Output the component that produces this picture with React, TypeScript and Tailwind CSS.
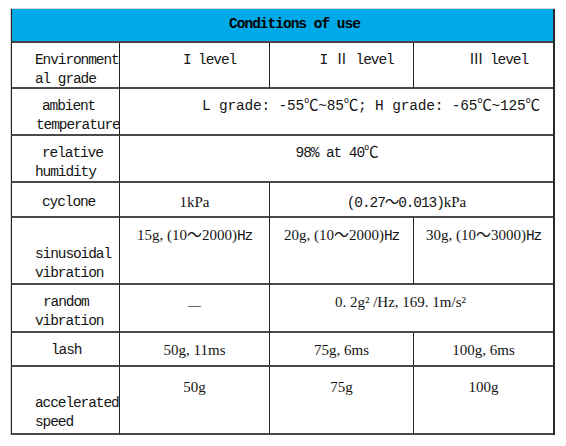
import type { ReactNode } from "react";

const mono = "font-['Liberation_Mono','Noto_Sans_CJK_SC',monospace] text-[14.5px] tracking-[-1.1px]";
const serif = "font-['Liberation_Serif','Noto_Sans_CJK_SC',serif] text-[15px]";

function Cell({ className = "", children }: { className?: string; children?: ReactNode }) {
  return (
    <div
      className={
        "border-l border-b-2 border-l-[#222] border-b-[#4a4a4a] leading-[19px] text-[#151515] whitespace-nowrap " +
        className
      }
    >
      {children}
    </div>
  );
}

// libellé de la première colonne, une ligne par entrée
function Label({ lines, top = "pt-2" }: { lines: [string, number][]; top?: string }) {
  return (
    <Cell className={mono + " pl-[23px] " + top}>
      {lines.map(([t, indent], i) => (
        <div key={i} style={{ paddingLeft: indent }} className="h-[19px]">
          {t}
        </div>
      ))}
    </Cell>
  );
}

export default function App() {
  return (
    <div className="w-[566px] h-[446px] bg-white pt-[8px] pl-[10px]">
      <div className="w-fit border-l border-t border-[#d6d6d6]">
        <div className="grid w-fit grid-cols-[108px_150px_144px_140px] grid-rows-[34px_46px_47px_47px_35px_67px_48px_34px_68px] border-r-2 border-r-[#2a2a2a]">
          <div className="col-span-4 flex items-center justify-center border-l border-b-2 border-l-[#222] border-b-[#444] bg-[#00a9e7] pl-6">
            <span className="font-['Liberation_Mono',monospace] text-[14.5px] font-bold tracking-[-1px] text-black">
              Conditions of use
            </span>
          </div>

          {/* niveau */}
          <Label lines={[["Environment", 0], ["al grade", 0]]} />
          <Cell className={mono + " pt-2 text-center pl-[30px]"}>I level</Cell>
          <Cell className={mono + " pt-2 text-center pl-[30px]"}>I Ⅱ level</Cell>
          <Cell className={mono + " pt-2 text-center pl-[30px]"}>Ⅲ level</Cell>

          {/* température */}
          <Label lines={[["ambient", 7], ["temperature", 1]]} />
          <Cell className={mono + " pt-2 col-span-3 pl-[82px]"}>
            <span className="tracking-[-0.2px]">L grade: -55℃~85℃; H grade: -65℃~125℃</span>
          </Cell>

          {/* humidité */}
          <Label lines={[["relative", 7], ["humidity", 0]]} />
          <Cell className={mono + " pt-2 col-span-3 text-center"}>98% at 40℃</Cell>

          {/* pression */}
          <Label lines={[["cyclone", 7]]} top="pt-[10px]" />
          <Cell className={serif + " pt-[10px] text-center"}>1kPa</Cell>
          <Cell className={mono + " pt-[10px] col-span-2 text-center pr-[10px]"}>
            (0.27～0.013)<span className={serif + " tracking-normal"}>kPa</span>
          </Cell>

          {/* vibration sinusoïdale */}
          <Label lines={[["", 0], ["sinusoidal", 0], ["vibration", 0]]} />
          <Cell className={serif + " pt-2 text-center"}>
            15g, (10～2000)<span className={mono}>Hz</span>
          </Cell>
          <Cell className={serif + " pt-2 text-center"}>
            20g, (10～2000)<span className={mono}>Hz</span>
          </Cell>
          <Cell className={serif + " pt-2 text-center"}>
            30g, (10～3000)<span className={mono}>Hz</span>
          </Cell>

          {/* vibration aléatoire */}
          <Label lines={[["random", 8], ["vibration", 0]]} />
          <Cell className="flex items-center justify-center pb-[6px]">
            <span className="font-['DejaVu_Sans',sans-serif] text-[14px] leading-[19px] text-[#666]">—</span>
          </Cell>
          <Cell className={serif + " pt-2 col-span-2 text-center pr-[22px]"}>0. 2g² /Hz, 169. 1m/s²</Cell>

          {/* choc */}
          <Label lines={[["lash", 16]]} />
          <Cell className={serif + " pt-2 text-center"}>50g, 11ms</Cell>
          <Cell className={serif + " pt-2 text-center"}>75g, 6ms</Cell>
          <Cell className={serif + " pt-2 text-center"}>100g, 6ms</Cell>

          {/* accélération */}
          <Label lines={[["", 0], ["accelerated", 0], ["speed", 0]]} />
          <Cell className={serif + " pt-[11px] text-center"}>50g</Cell>
          <Cell className={serif + " pt-[11px] text-center"}>75g</Cell>
          <Cell className={serif + " pt-[11px] text-center"}>100g</Cell>
        </div>
      </div>
    </div>
  );
}
